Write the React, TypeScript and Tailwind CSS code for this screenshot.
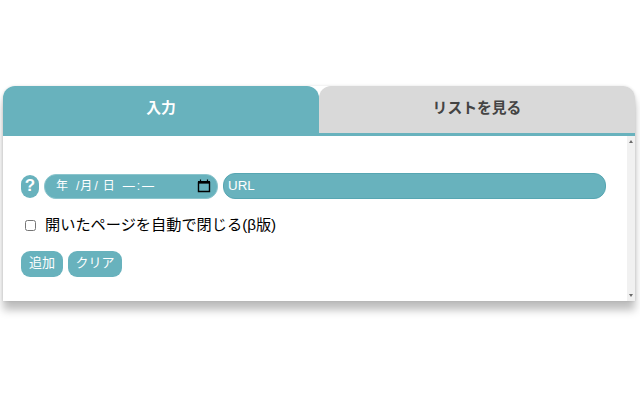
const TabBar = () => (
  <div className="flex h-[50px] border-b-[3px] border-[#68b2bd]">
    <div className="flex h-[50px] w-[316px] items-center justify-center rounded-t-[12px] bg-[#68b2bd] pb-[5px] text-[14.8px] font-bold text-white">
      入力
    </div>
    <div className="flex h-[47px] flex-1 items-center justify-center rounded-t-[12px] bg-[#d9d9d9] pb-[2px] text-[14.8px] font-bold text-[#444444]">
      リストを見る
    </div>
  </div>
)

const DateField = () => (
  <div className="flex h-[25px] w-[174px] items-center rounded-[12px] border border-[#8cc5cd] bg-[#68b2bd] pl-[11px] pr-[6px] text-[12px] text-white">
    <span>年</span>
    <span className="ml-[8px]">/</span>
    <span className="ml-[1px]">月</span>
    <span className="ml-[2px]">/</span>
    <span className="ml-[5px]">日</span>
    <span className="ml-[8px]">—</span>
    <span className="ml-[2px]">:</span>
    <span className="ml-[2px]">—</span>
    <svg className="ml-auto text-black" width="14" height="14" viewBox="0 0 14 14" fill="none">
      <path d="M1.5 3.5h11v9h-11z" stroke="currentColor" strokeWidth="1.4" />
      <path d="M1 2h12v2.5H1z" fill="currentColor" />
      <path d="M3.5 0.5v2M10.5 0.5v2" stroke="currentColor" strokeWidth="1.2" />
    </svg>
  </div>
)

const Scrollbar = () => (
  <div className="flex w-[8px] flex-col items-center justify-between bg-[#f1f1f1] py-[4px]">
    <div className="h-0 w-0 border-x-[2px] border-b-[3px] border-x-transparent border-b-[#6b6b6b]" />
    <div className="h-0 w-0 border-x-[2px] border-t-[3px] border-x-transparent border-t-[#6b6b6b]" />
  </div>
)

export default function App() {
  return (
    <div className="h-[400px] w-[640px] bg-white px-[3px] pt-[86px] font-['Liberation_Sans','Noto_Sans_CJK_JP',sans-serif]">
      <div className="w-[632px] rounded-t-[12px] bg-white shadow-[0_9px_8px_rgba(0,0,0,0.26),0_0_3px_rgba(0,0,0,0.12)]">
        <TabBar />
        <div className="flex h-[165px]">
          <div className="flex-1 pl-[18px] pt-[37px]">
            <div className="flex items-center">
              <div className="flex h-[23px] w-[18px] items-center justify-center rounded-[9px] bg-[#68b2bd] text-[17px] font-black text-white">
                ?
              </div>
              <div className="ml-[5px]">
                <DateField />
              </div>
              <div className="ml-[5px] flex h-[26px] w-[383px] items-center rounded-[12px] border border-[#57a6b2] bg-[#68b2bd] pl-[4px] text-[13.33px] text-white">
                URL
              </div>
            </div>
            <label className="mt-[14px] flex h-[24px] items-center text-[15.2px] text-black">
              <input type="checkbox" className="ml-[4px] h-[11px] w-[11px]" />
              <span className="ml-[9px]">開いたページを自動で閉じる(β版)</span>
            </label>
            <div className="mt-[14px] flex gap-[5px]">
              <button className="h-[26px] w-[42px] rounded-[9px] bg-[#68b2bd] pb-[2px] text-[13px] text-white">追加</button>
              <button className="h-[26px] w-[54px] rounded-[9px] bg-[#68b2bd] pb-[2px] text-[13px] text-white">クリア</button>
            </div>
          </div>
          <Scrollbar />
        </div>
      </div>
    </div>
  )
}
